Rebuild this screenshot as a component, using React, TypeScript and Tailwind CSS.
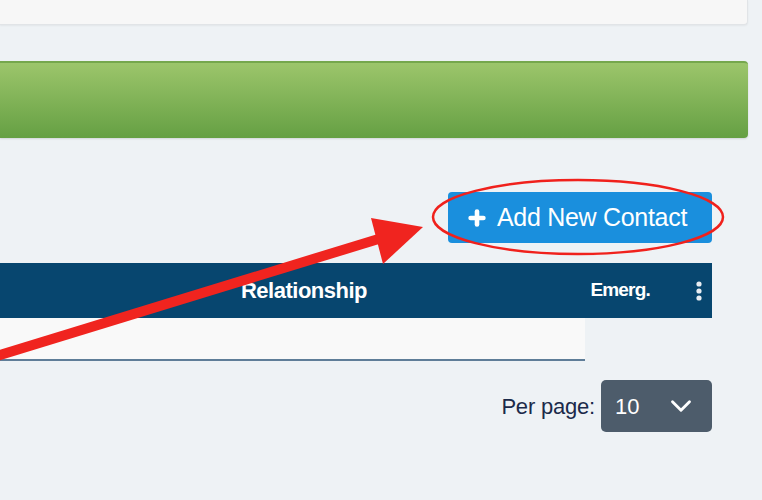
import { Plus, ChevronDown } from "lucide-react"

const font = { fontFamily: '"Liberation Sans", Arial, sans-serif' }

function Annotation() {
  return (
    <svg className="pointer-events-none absolute inset-0" width="762" height="500" viewBox="0 0 762 500">
      <ellipse cx="578" cy="217" rx="145" ry="37" fill="none" stroke="#f0211c" strokeWidth="2.5" />
      <line x1="-10" y1="358" x2="385" y2="237" stroke="#f0241f" strokeWidth="10" />
      <polygon points="423,227 371,218 383,264" fill="#f0241f" />
    </svg>
  )
}

function Kebab() {
  return (
    <svg width="8" height="20" viewBox="0 0 8 20" fill="#e8edf2">
      <circle cx="4" cy="3" r="2.6" />
      <circle cx="4" cy="10" r="2.6" />
      <circle cx="4" cy="17" r="2.6" />
    </svg>
  )
}

export default function App() {
  return (
    <div className="relative h-[500px] w-[762px] overflow-hidden bg-[#eef2f5]" style={font}>
      <div className="mr-[14px] h-[25px] rounded-br-sm border-b border-r border-[#e1e4e7] bg-[#f7f7f7] shadow-[0_1px_2px_rgba(0,0,0,0.05)]" />

      <div className="mr-[14px] mt-[36px] h-[77px] rounded-r-[4px] border-t-2 border-[#75a74d] bg-gradient-to-b from-[#9cc56b] to-[#65a043] shadow-[0_1px_2px_rgba(0,0,0,0.12)]" />

      <div className="mt-[54px] flex justify-end pr-[50px]">
        <button className="flex h-[51px] w-[264px] items-center gap-[9px] rounded-[4px] bg-[#1a8fdd] pl-[18px] text-[25px] tracking-[-0.3px] text-white">
          <Plus size={22} strokeWidth={5} />
          <span>Add New Contact</span>
        </button>
      </div>

      <div className="mt-[20px] flex h-[55px] w-[712px] items-center bg-[#07466f] font-bold text-white">
        <div className="w-[200px]" />
        <div className="w-[208px] text-center text-[22px] tracking-[-0.5px]">Relationship</div>
        <div className="flex-1 text-right text-[19px] tracking-[-0.8px]">Emerg.</div>
        <div className="flex w-[62px] justify-end pr-[9px]">
          <Kebab />
        </div>
      </div>

      <div className="h-[43px] w-[585px] border-b-2 border-[#5f7d98] bg-[#f9f9f9]" />

      <div className="mt-[19px] flex items-center justify-end gap-[6px] pr-[50px]">
        <span className="text-[22px] tracking-[-0.2px] text-[#1b2a4a]">Per page:</span>
        <div className="flex h-[52px] w-[111px] items-center justify-between rounded-[5px] bg-[#4d5c6b] pl-[14px] pr-[14px] text-[22px] text-white">
          <span>10</span>
          <ChevronDown size={34} strokeWidth={2} />
        </div>
      </div>

      <Annotation />
    </div>
  )
}
